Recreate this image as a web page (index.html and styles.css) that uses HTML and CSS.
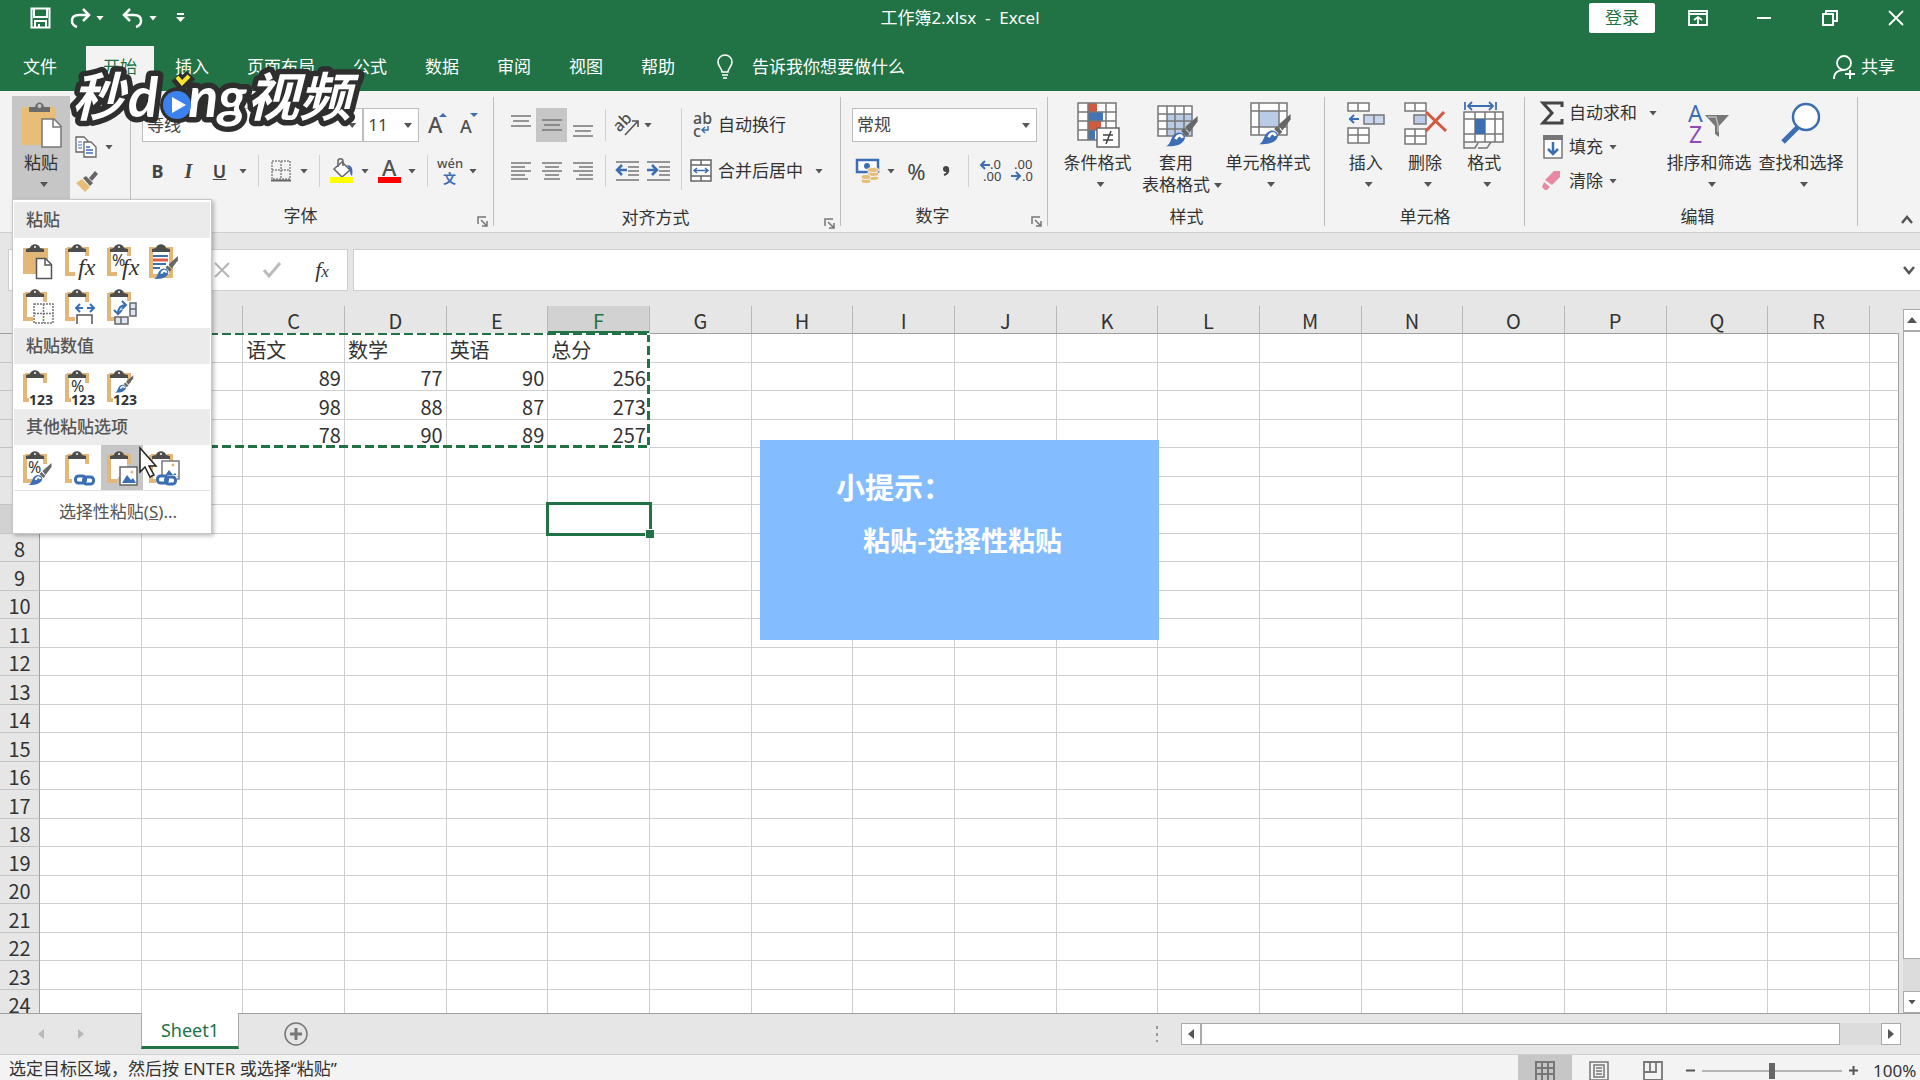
FILE: index.html
```html
<!doctype html>
<html lang="zh-CN">
<head>
	<meta charset="UTF-8">
	<title>工作簿2.xlsx - Excel</title>
	<link rel="stylesheet" href="styles.css">
</head>
<body>
	<!-- shared icon parts -->
	<svg class="sprite" width="0" height="0">
		<symbol id="board" viewBox="0 0 32 36">
			<path d="M3 5h20v8M3 4v26h8" fill="none" stroke="#e3b778" stroke-width="4"/>
			<path d="M5 7h16v10l-10 11H5z" fill="#fff"/>
			<path d="M4 8V5l4-1c1-5 9-5 10 0l4 1v3z" fill="#4d4d4d"/>
			<circle cx="13" cy="3" r="1" fill="#fff"/>
		</symbol>
		<symbol id="brush" viewBox="0 0 24 24">
			<path d="M23 1l-9 8 3 4 6-8z" fill="#666"/>
			<path d="M13 10l4 4-2 2-4-4z" fill="#666"/>
			<path d="M0 23c4-1 3-9 9-10 4 0 6 3 4 6-3 4-8 4-13 4z" fill="#3c6eb4"/>
			<path d="M7 18c1-3 4-4 5-1" fill="none" stroke="#fff" stroke-width="2"/>
		</symbol>
		<symbol id="chain" viewBox="0 0 22 12">
			<g fill="none" stroke="#3c6eb4" stroke-width="3"><rect x="2" y="2" width="10" height="7" rx="3"/><rect x="10" y="3" width="10" height="7" rx="3"/></g>
		</symbol>
		<symbol id="launch" viewBox="0 0 11 11">
			<path d="M1 8V1h8M4 4l6 6M10 5v5H5" fill="none" stroke="#777" stroke-width="1.5"/>
		</symbol>
	</svg>

	<header class="top">
		<div class="titlebar">
			<div class="quick">
				<button aria-label="保存"><svg width="21" height="22" viewBox="0 0 21 22"><path d="M1.500 1.500h18v19h-18zM4 2v8h13V2M5 20v-6h11v6M9 20v-3" fill="none" stroke="#fff" stroke-width="2"/></svg></button>
				<button aria-label="恢复"><svg width="20" height="20" viewBox="0 0 20 20"><path d="M7 19c-7-2-7-12 2-12h9M13 1l6 6-6 6" fill="none" stroke="#fff" stroke-width="2.500"/></svg><i class="caret"></i></button>
				<button aria-label="撤消"><svg width="20" height="20" viewBox="0 0 20 20"><path d="M13 19c7-2 7-12-2-12H2M7 1L1 7l6 6" fill="none" stroke="#fff" stroke-width="2.500"/></svg><i class="caret"></i></button>
				<button aria-label="自定义"><svg width="9" height="10" viewBox="0 0 9 10"><path d="M1 1h7" stroke="#fff" stroke-width="2"/><path d="M0 4h9l-4.500 5z" fill="#fff"/></svg></button>
			</div>
			<div class="doc">工作簿2.xlsx&nbsp; -&nbsp; Excel</div>
			<div class="window">
				<button class="login">登录</button>
				<button aria-label="功能区显示选项"><svg width="20" height="16" viewBox="0 0 20 16"><path d="M1 1h18v14H1zM1 4h18M10 14V7M6 10l4-3 4 3" fill="none" stroke="#fff" stroke-width="1.800"/></svg></button>
				<button aria-label="最小化"><svg width="14" height="14" viewBox="0 0 14 14"><path d="M0 7h14" stroke="#fff" stroke-width="2"/></svg></button>
				<button aria-label="还原"><svg width="16" height="16" viewBox="0 0 16 16"><path d="M1 4h10v11H1zM4 4V1h11v10h-4" fill="none" stroke="#fff" stroke-width="2"/></svg></button>
				<button aria-label="关闭"><svg width="16" height="16" viewBox="0 0 16 16"><path d="M1 1l14 14M15 1L1 15" stroke="#fff" stroke-width="1.800"/></svg></button>
			</div>
		</div>
		<nav class="tabs">
			<a class="file" href="#">文件</a>
			<a class="active" href="#">开始</a>
			<a href="#">插入</a>
			<a href="#">页面布局</a>
			<a href="#">公式</a>
			<a href="#">数据</a>
			<a href="#">审阅</a>
			<a href="#">视图</a>
			<a href="#">帮助</a>
			<a class="tell" href="#"><svg width="18" height="26" viewBox="0 0 18 26"><path d="M6 18c0-4-4-5-4-10a7 7 0 0 1 14 0c0 5-4 6-4 10zM6 21h6M7 24h4" fill="none" stroke="#fff" stroke-width="1.600"/></svg>告诉我你想要做什么</a>
			<a class="share" href="#"><svg width="22" height="24" viewBox="0 0 22 24"><circle cx="11" cy="8" r="7" fill="none" stroke="#fff" stroke-width="1.800"/><path d="M1 24c0-6 4-9 9-9M17 15v9M12 19h10" fill="none" stroke="#fff" stroke-width="2"/></svg>共享</a>
		</nav>
	</header>

	<section class="ribbon">
		<!-- clipboard -->
		<div class="group clipboard">
			<button class="big paste">
				<svg width="42" height="46"><path d="M2 5h34v38H2z" fill="#e8bd78"/><path d="M9 10V5h6c1-6 8-6 9 0h6v5z" fill="#6b6b6b"/><circle cx="19.500" cy="4" r="2" fill="#c6c6c6"/><path d="M22 17h12l7 7v21H22z" fill="#fff" stroke="#777" stroke-width="1.500"/><path d="M33 17v8h8" fill="none" stroke="#777" stroke-width="1.500"/></svg>
				<span>粘贴</span><i class="caret"></i>
			</button>
			<div class="side">
				<button aria-label="复制"><svg width="22" height="22" viewBox="0 0 22 22"><path d="M1 1h8l4 4v11H1z" fill="#fff" stroke="#666" stroke-width="1.300"/><path d="M3 6h4M3 9h4M3 12h4" stroke="#3c6eb4"/><path d="M9 6h7l5 5v10H9z" fill="#fff" stroke="#666" stroke-width="1.300"/><path d="M11 11h4M11 14h7M11 17h7" stroke="#3c6eb4" stroke-width="1.300"/></svg><i class="caret"></i></button>
				<button aria-label="格式刷"><svg width="23" height="22" viewBox="0 0 23 22"><path d="M1 13l6-4 8 8-5 5z" fill="#e8bd78"/><path d="M8 8l3-2 7 7-3 3z" fill="#666"/><path d="M14 8l6-7 3 3-6 7z" fill="#666"/></svg></button>
			</div>
			<div class="menu">
				<h4>粘贴</h4>
				<div class="icons">
					<button aria-label="粘贴"><svg width="32" height="36" viewBox="0 0 32 36"><path d="M1 4h25v26H1z" fill="#e3b778"/><path d="M4 8V5l4-1c1-5 9-5 10 0l4 1v3z" fill="#4d4d4d"/><circle cx="13" cy="3" r="1" fill="#fff"/><path d="M14.500 14.500h9l6 6v14h-15z" fill="#fff" stroke="#555" stroke-width="1.500"/><path d="M23 15v6h6" fill="none" stroke="#555" stroke-width="1.500"/></svg></button>
					<button aria-label="公式"><svg width="32" height="36"><use href="#board" width="32" height="36"/><path class="gap" d="M17 12h10v12H17z"/><text class="fx" x="14" y="31">fx</text></svg></button>
					<button aria-label="公式和数字格式"><svg width="32" height="36"><use href="#board" width="32" height="36"/><path class="gap" d="M19 12h8v12h-8z"/><text class="pct" x="6" y="22">%</text><text class="fx" x="16" y="31">fx</text></svg></button>
					<button aria-label="保留源格式"><svg width="32" height="36"><path d="M3 5h20v27H3z" fill="#fff" stroke="#e3b778" stroke-width="4"/><path d="M4 8V5l4-1c1-5 9-5 10 0l4 1v3z" fill="#4d4d4d"/><path d="M5 12h15M5 20h13" stroke="#3c6eb4" stroke-width="2"/><path d="M5 16h15" stroke="#d9614c" stroke-width="3"/><path d="M5 24h7" stroke="#3c6eb4" stroke-width="2"/><use href="#brush" x="6" y="11" width="25" height="25"/></svg></button>
					<button aria-label="无边框"><svg width="32" height="36"><use href="#board" width="32" height="36"/><path d="M12 15h19v19H12zM21.500 15v19M12 24.500h19" fill="#fff" stroke="#777" stroke-width="1.500" stroke-dasharray="2 1"/></svg></button>
					<button aria-label="保留源列宽"><svg width="32" height="36"><use href="#board" width="32" height="36"/><path d="M11 14h21v21H11z" fill="#fff"/><path d="M12 19h7M16 15l-4 4 4 4M23 19h7M26 15l4 4-4 4" fill="none" stroke="#3c6eb4" stroke-width="2"/><path d="M13 35v-9h15v9" fill="none" stroke="#555" stroke-width="1.500"/></svg></button>
					<button aria-label="转置"><svg width="32" height="36"><use href="#board" width="32" height="36"/><path class="gap" d="M9 12h22v23H9z"/><path d="M9 28h13v7H9z M24 14h6v13h-6z M15 28v7 M24 20h6" fill="#dce6f4" stroke="#666" stroke-width="1.500"/><path d="M12 25c0-6 3-9 8-9M16 12l4 4-4 4M8 21l4 4 4-4" fill="none" stroke="#3c6eb4" stroke-width="2"/></svg></button>
				</div>
				<h4>粘贴数值</h4>
				<div class="icons">
					<button aria-label="值"><svg width="32" height="36"><use href="#board" width="32" height="36"/><path class="gap" d="M7 24h25v12H7z"/><text class="num" x="7" y="35">123</text></svg></button>
					<button aria-label="值和数字格式"><svg width="32" height="36"><use href="#board" width="32" height="36"/><text class="pct" x="7" y="22">%</text><path class="gap" d="M7 24h25v12H7z"/><text class="num" x="7" y="35">123</text></svg></button>
					<button aria-label="值和源格式"><svg width="32" height="36"><use href="#board" width="32" height="36"/><use href="#brush" x="9" y="4" width="19" height="20"/><path class="gap" d="M7 24h25v12H7z"/><text class="num" x="7" y="35">123</text></svg></button>
				</div>
				<h4>其他粘贴选项</h4>
				<div class="icons">
					<button aria-label="格式"><svg width="32" height="36"><use href="#board" width="32" height="36"/><text class="pct" x="6" y="22">%</text><use href="#brush" x="6" y="11" width="25" height="24"/></svg></button>
					<button aria-label="粘贴链接"><svg width="32" height="36"><use href="#board" width="32" height="36"/><path class="gap" d="M8 23h24v12H8z"/><use href="#chain" x="9" y="23" width="23" height="12"/></svg></button>
					<button class="hot" aria-label="图片"><svg width="32" height="36"><use href="#board" width="32" height="36"/><path d="M14 16h17v18H14z" fill="#fff" stroke="#666" stroke-width="1.500"/><path d="M16 32l5-8 4 5 2-2 3 5z" fill="#3c6eb4"/><circle cx="26" cy="21" r="1.500" fill="#e3b778"/></svg></button>
					<button aria-label="链接的图片"><svg width="32" height="36"><use href="#board" width="32" height="36"/><path d="M14 10h17v18H14z" fill="#fff" stroke="#777" stroke-width="1.500"/><path d="M16 26l5-7 4 5 2-2 3 4z" fill="#3c6eb4"/><circle cx="25" cy="14" r="1.500" fill="#e3b778"/><path class="gap" d="M8 24h21v11H8z"/><use href="#chain" x="7" y="23" width="23" height="12"/></svg></button>
				</div>
				<button class="special">选择性粘贴(<u>S</u>)...</button>
				<svg class="pointer" width="19" height="32" viewBox="0 0 19 32"><path d="M1 1v24l5-5 5 10 4-2-5-9h7z" fill="#fff" stroke="#222" stroke-width="1.500"/></svg>
			</div>
		</div>

		<!-- font -->
		<div class="group font">
			<div class="row">
				<span class="pick face"><select aria-label="字体"><option>等线</option></select></span>
				<span class="pick size"><select aria-label="字号"><option>11</option></select></span>
				<button aria-label="增大字号"><svg width="20" height="24"><text class="lat" x="1" y="20" font-size="22">A</text><path d="M12 4h8l-4-4z" fill="#3c6eb4"/></svg></button>
				<button aria-label="减小字号"><svg width="20" height="24"><text class="lat" x="2" y="20" font-size="18">A</text><path d="M12 0h8l-4 4z" fill="#3c6eb4"/></svg></button>
			</div>
			<div class="row">
				<button class="glyph"><b>B</b></button>
				<button class="glyph it"><b>I</b></button>
				<button class="glyph"><u>U</u></button><i class="drop"></i>
				<i class="sep"></i>
				<button aria-label="边框"><svg width="20" height="22"><path d="M1 1h18v18H1zM10 1v18M1 10h18" fill="none" stroke="#888" stroke-width="1.500" stroke-dasharray="2 1"/><path d="M0 20.500h20" stroke="#666" stroke-width="2"/></svg></button><i class="drop"></i>
				<i class="sep"></i>
				<button aria-label="填充颜色"><svg width="24" height="26"><path d="M4 11l8-7 8 8-8 7z" fill="#fff" stroke="#666" stroke-width="1.500"/><path d="M8 9V3c0-3 5-3 5 0v5" fill="none" stroke="#666" stroke-width="1.500"/><path d="M17 7c6 0 6 6 5 11-3-2-1-7-5-11z" fill="#3c6eb4"/><path d="M0 19h23v6H0z" fill="#ff0"/></svg></button><i class="drop"></i>
				<button aria-label="字体颜色"><svg width="24" height="26"><text class="lat" x="5" y="18" font-size="22">A</text><path d="M1 19h23v6H1z" fill="#f00"/></svg></button><i class="drop"></i>
				<i class="sep"></i>
				<button aria-label="拼音"><svg width="26" height="28"><text class="lat" x="0" y="11" font-size="13">wén</text><text class="wen" x="6" y="26" font-size="13">文</text></svg></button><i class="drop"></i>
			</div>
			<div class="name launcher">字体<svg width="11" height="11"><use href="#launch"/></svg></div>
		</div>

		<!-- alignment -->
		<div class="group align">
			<div class="cols">
				<div class="block">
					<div class="row">
						<button aria-label="顶端对齐"><svg width="20" height="24"><path d="M0 3h20M2 8h16M0 13h20" stroke="#777" stroke-width="1.500"/></svg></button>
						<button class="on" aria-label="垂直居中"><svg width="20" height="24"><path d="M0 7h20M2 12h16M0 17h20" stroke="#777" stroke-width="1.500"/></svg></button>
						<button aria-label="底端对齐"><svg width="20" height="24"><path d="M0 13h20M2 18h16M0 23h20" stroke="#777" stroke-width="1.500"/></svg></button>
						<i class="sep"></i>
						<button aria-label="方向"><svg width="24" height="24"><text class="lat" x="0" y="16" font-size="16" transform="rotate(-45 6 14)">ab</text><path d="M9 22L22 8M16 8h6v6" fill="none" stroke="#555" stroke-width="1.600"/></svg></button><i class="drop tight"></i>
					</div>
					<div class="row">
						<button aria-label="左对齐"><svg width="20" height="18"><path d="M0 1h20M0 5h14M0 9h20M0 13h14M0 17h17" stroke="#777" stroke-width="1.500"/></svg></button>
						<button aria-label="居中"><svg width="20" height="18"><path d="M0 1h20M3 5h14M0 9h20M3 13h14M2 17h16" stroke="#777" stroke-width="1.500"/></svg></button>
						<button aria-label="右对齐"><svg width="20" height="18"><path d="M0 1h20M6 5h14M0 9h20M6 13h14M3 17h17" stroke="#777" stroke-width="1.500"/></svg></button>
						<i class="sep"></i>
						<button aria-label="减少缩进"><svg width="24" height="22"><path d="M0 2h23M12 7h11M12 11h11M12 15h11M0 20h23" stroke="#777" stroke-width="1.500"/><path d="M1 10h10M6 5l-5 5 5 5" fill="none" stroke="#3c6eb4" stroke-width="2.500"/></svg></button>
						<button aria-label="增加缩进"><svg width="24" height="22"><path d="M0 2h23M12 7h11M12 11h11M12 15h11M0 20h23" stroke="#777" stroke-width="1.500"/><path d="M0 10h10M5 5l5 5-5 5" fill="none" stroke="#3c6eb4" stroke-width="2.500"/></svg></button>
					</div>
				</div>
				<i class="sep tall"></i>
				<div class="block">
					<div class="row">
						<button class="wide"><svg width="26" height="26"><text class="lat" x="5" y="12" font-size="16">ab</text><text class="lat" x="5" y="25" font-size="16">c</text><path d="M20 14v4h-5M17 15l-3 3 3 3" fill="none" stroke="#3c6eb4" stroke-width="1.500"/></svg>自动换行</button>
					</div>
					<div class="row">
						<button class="wide"><svg width="26" height="24"><path d="M3 1h20v21H3zM3 6h20M3 17h20M13 1v5M13 17v5" fill="#fff" stroke="#666" stroke-width="1.500"/><path d="M6 11.500h14M9 9l-3 2.500L9 14M17 9l3 2.500-3 2.500" fill="none" stroke="#3c6eb4" stroke-width="1.500"/></svg>合并后居中</button><i class="drop far"></i>
					</div>
				</div>
			</div>
			<div class="name launcher">对齐方式<svg width="11" height="11"><use href="#launch"/></svg></div>
		</div>

		<!-- number -->
		<div class="group number">
			<div class="row">
				<span class="pick format"><select aria-label="数字格式"><option>常规</option></select></span>
			</div>
			<div class="row">
				<button aria-label="会计数字格式"><svg width="24" height="26"><path d="M1 2h21v12H1z" fill="#fff" stroke="#3c6eb4" stroke-width="2.500"/><circle cx="11" cy="8" r="3" fill="#3c6eb4"/><g fill="#e8bd78" stroke="#f3f3f3"><ellipse cx="17" cy="20" rx="6" ry="2.500"/><ellipse cx="17" cy="16" rx="6" ry="2.500"/><ellipse cx="17" cy="12" rx="6" ry="2.500"/><ellipse cx="10" cy="23" rx="5" ry="2.500"/><ellipse cx="10" cy="19" rx="5" ry="2.500"/></g></svg></button><i class="drop"></i>
				<button class="glyph percent">%</button>
				<button class="glyph comma" aria-label="千位分隔样式"><svg width="8" height="12"><circle cx="4" cy="4" r="3" fill="#444"/><path d="M6 3c1 4-1 6-4 7" fill="none" stroke="#444" stroke-width="2"/></svg></button>
				<i class="sep"></i>
				<button aria-label="增加小数位数"><svg width="24" height="26"><text class="dec" x="11" y="11">.0</text><text class="dec" x="4" y="23">.00</text><path d="M2 7h9M6 3L2 7l4 4" fill="none" stroke="#3c6eb4" stroke-width="2"/></svg></button>
				<button aria-label="减少小数位数"><svg width="24" height="26"><text class="dec" x="4" y="11">.00</text><text class="dec" x="12" y="23">.0</text><path d="M1 18h9M6 14l4 4-4 4" fill="none" stroke="#3c6eb4" stroke-width="2"/></svg></button>
			</div>
			<div class="name launcher">数字<svg width="11" height="11"><use href="#launch"/></svg></div>
		</div>

		<!-- styles -->
		<div class="group styles">
			<div class="bigs">
				<button class="big w77"><svg width="44" height="46"><path d="M2 1h38v37H2z" fill="#fff"/><path d="M12 1h9v9h-9zM12 19h13v9H12z" fill="#d4573f"/><path d="M12 10h15v9H12zM12 28h7v10h-7z" fill="#4375b5"/><path d="M2 1h38v37H2zM12 1v37M30 1v37M2 10h38M2 19h38M2 28h38" fill="none" stroke="#777" stroke-width="1.500"/><path d="M21 26h22v19H21z" fill="#fff" stroke="#666" stroke-width="1.500"/><path d="M27 33h10M27 38h10M35 29l-5 13" stroke="#444" stroke-width="1.500"/></svg><span>条件格式</span><i class="caret"></i></button>
				<button class="big w84"><svg width="44" height="46"><path d="M4 4h34v30H4z" fill="#fff"/><path d="M13 12h25v22H13z" fill="#b9cbe6"/><path d="M4 4h34v30H4zM13 4v30M21 4v30M30 4v30M4 12h34M4 19h34M4 27h34" fill="none" stroke="#777" stroke-width="1.500"/><use href="#brush" x="12" y="12" width="33" height="34"/></svg><span>套用<br>表格格式</span><i class="caret inline"></i></button>
				<button class="big w94"><svg width="44" height="46"><path d="M5 1h36v32H5z" fill="#fff"/><path d="M13 9h20v16H13z" fill="#b9cbe6"/><path d="M5 1h36v32H5zM13 1v32M33 1v32M5 9h36M5 25h36" fill="none" stroke="#777" stroke-width="1.500"/><use href="#brush" x="13" y="10" width="33" height="34"/></svg><span>单元格样式</span><i class="caret"></i></button>
			</div>
			<div class="name">样式</div>
		</div>

		<!-- cells -->
		<div class="group cells">
			<div class="bigs">
				<button class="big w60"><svg width="40" height="46"><path d="M2 1h21v8H2zM12 1v8M2 26h21v15H2zM12 26v15M2 33h21" fill="#fff" stroke="#777" stroke-width="1.500"/><path d="M18 13h20v9H18zM28 13v9" fill="#c9d7ee" stroke="#777" stroke-width="1.500"/><path d="M3 17h10M8 13l-4 4 4 4" fill="none" stroke="#3c6eb4" stroke-width="2"/></svg><span>插入</span><i class="caret"></i></button>
				<button class="big w60"><svg width="42" height="46"><path d="M1 1h21v8H1zM11 1v8M1 27h21v15H1zM11 27v15M1 34h21" fill="#fff" stroke="#777" stroke-width="1.500"/><path d="M10 13h12v9H10z" fill="#b9cbe6" stroke="#777" stroke-width="1.500"/><path d="M22 10l20 19M40 10L22 29" stroke="#d4573f" stroke-width="3"/></svg><span>删除</span><i class="caret"></i></button>
				<button class="big w60"><svg width="42" height="48"><path d="M1 10h39v30H1zM12 10v30M22 10v30M32 10v30M1 17h39M1 32h39" fill="#fff" stroke="#777" stroke-width="1.500"/><path d="M12 17h10v15H12z" fill="#3c6eb4"/><path d="M1 40v6h11l3-5M15 46h9l4-6" fill="none" stroke="#777" stroke-width="1.500"/><path d="M2 0v8M33 0v8M5 4h25M9 0L5 4l4 4M26 0l4 4-4 4" fill="none" stroke="#3c6eb4" stroke-width="1.800"/></svg><span>格式</span><i class="caret"></i></button>
			</div>
			<div class="name">单元格</div>
		</div>

		<!-- editing -->
		<div class="group editing">
			<div class="bigs">
				<div class="list">
					<button><svg width="26" height="26"><path d="M25 7V3H6l9 10-9 10h19v-4" fill="none" stroke="#444" stroke-width="3"/></svg>自动求和<i class="caret more"></i></button>
					<button><svg width="26" height="26"><path d="M7 2h18v22H7z" fill="#fff" stroke="#777" stroke-width="1.500"/><path d="M6 1h20v5H6z" fill="#777"/><path d="M16 8v12M11 15l5 5 5-5" fill="none" stroke="#3c6eb4" stroke-width="2.500"/></svg>填充<i class="caret"></i></button>
					<button><svg width="26" height="26"><path d="M17 3h6v6l-8 8-7-5z" fill="#e888a4"/><path d="M7 14l6 5-3 3H8l-3-3z" fill="#e888a4"/></svg>清除<i class="caret"></i></button>
				</div>
				<button class="big w92"><svg width="42" height="46"><text class="az" x="0" y="20" fill="#3c6eb4">A</text><text class="az" x="1" y="41" fill="#8e4bb8">Z</text><path d="M17 13h24L31 24v11l-4-3v-8z" fill="#777"/><path d="M20 15h8l2 8v7" fill="none" stroke="#bbb" stroke-width="1.500"/></svg><span>排序和筛选</span><i class="caret"></i></button>
				<button class="big w92"><svg width="42" height="46"><circle cx="26" cy="15" r="13" fill="#fff" stroke="#3c6eb4" stroke-width="2.500"/><path d="M18 25L3 40" stroke="#3c6eb4" stroke-width="5"/></svg><span>查找和选择</span><i class="caret"></i></button>
			</div>
			<div class="name">编辑</div>
		</div>
		<button class="collapse" aria-label="折叠功能区"><svg width="12" height="9"><path d="M1 8l5-6 5 6" fill="none" stroke="#555" stroke-width="2.500"/></svg></button>
	</section>

	<section class="formula">
		<div class="namebox">
			<button aria-label="取消"><svg width="16" height="16"><path d="M1 1l14 14M15 1L1 15" stroke="#b5b5b5" stroke-width="2"/></svg></button>
			<button aria-label="输入"><svg width="18" height="16"><path d="M1 8l5 6L17 1" fill="none" stroke="#bbb" stroke-width="3"/></svg></button>
			<button class="insfn"><i>f</i><small>x</small></button>
		</div>
		<div class="entry">
			<input type="text" aria-label="编辑栏">
			<svg width="12" height="9"><path d="M1 1l5 6 5-6" fill="none" stroke="#555" stroke-width="2.500"/></svg>
		</div>
	</section>

	<main class="work">
		<div class="sheet">
			<table id="grid"></table>
			<div class="ants"></div>
		</div>
		<div class="vscroll">
			<button aria-label="向上"><i class="caret up"></i></button>
			<div class="thumb"></div>
			<button aria-label="向下"><i class="caret"></i></button>
		</div>
	</main>

	<section class="sheets">
		<div class="nav"><button aria-label="上一张"><i class="caret left"></i></button><button aria-label="下一张"><i class="caret right"></i></button></div>
		<button class="sheettab">Sheet1</button>
		<button class="add" aria-label="新工作表"><svg width="24" height="24"><circle cx="12" cy="12" r="11" fill="none" stroke="#777" stroke-width="1.500"/><path d="M12 6v12M6 12h12" stroke="#777" stroke-width="3"/></svg></button>
		<svg class="dots" width="2" height="16"><path d="M1 0v16" stroke="#999" stroke-width="2" stroke-dasharray="3 4"/></svg>
		<div class="hscroll">
			<button aria-label="向左"><i class="caret left"></i></button>
			<div class="thumb"></div>
			<button aria-label="向右"><i class="caret right"></i></button>
		</div>
	</section>

	<footer class="status">
		<span class="msg">选定目标区域，然后按 ENTER 或选择“粘贴”</span>
		<button class="on" aria-label="普通"><svg width="20" height="20"><path d="M1 1h18v19H1zM7 1v19M13 1v19M1 7h18M1 13h18" fill="none" stroke="#777" stroke-width="2"/></svg></button>
		<button aria-label="页面布局"><svg width="20" height="20"><path d="M1 1h18v18H1zM5 4h10v12H5zM7 7h6M7 10h6M7 13h6" fill="none" stroke="#777" stroke-width="1.500"/></svg></button>
		<button aria-label="分页预览"><svg width="20" height="20"><path d="M1 1h18v18H1zM7 1v10h6V1M1 11h12" fill="none" stroke="#777" stroke-width="1.800"/></svg></button>
		<div class="zoom">
			<button aria-label="缩小"><svg width="9" height="9"><path d="M0 4.500h9" stroke="#555" stroke-width="2"/></svg></button>
			<input type="range" aria-label="显示比例" min="0" max="100" value="50">
			<button aria-label="放大"><svg width="9" height="9"><path d="M0 4.500h9M4.500 0v9" stroke="#555" stroke-width="2"/></svg></button>
			<span>100%</span>
		</div>
	</footer>

	<!-- video overlays -->
	<svg class="brand" width="290" height="70">
		<defs>
			<g id="brandtext"><text class="han" x="2" y="44">秒</text><text class="rom" x="58" y="45">d</text><text class="rom" x="118" y="45">ng</text><text class="han" x="177" y="44">视频</text></g>
		</defs>
		<use class="edge" href="#brandtext"/>
		<circle cx="108" cy="33" r="18" fill="#2e2e2e"/>
		<path d="M106 5l6 7 9-9" fill="none" stroke="#2e2e2e" stroke-width="12"/>
		<use class="face" href="#brandtext"/>
		<circle cx="107" cy="33" r="14" fill="#3b82ee"/>
		<path d="M102 25v16l14-8z" fill="#fff"/>
		<path d="M107 5l5 6 7-7" fill="none" stroke="#ffe62e" stroke-width="4"/>
	</svg>
	<aside class="tip">
		<h3>小提示：</h3>
		<p>粘贴-选择性粘贴</p>
	</aside>

	<script src="script.js"></script>
</body>
</html>
```

FILE: styles.css
```css
* {
	box-sizing: border-box;
}
body {
	margin: 0;
	height: 100vh;
	display: flex;
	flex-direction: column;
	overflow: hidden;
	background: #e6e6e6;
	color: #333;
	font-family: "Noto Sans", "Noto Sans CJK SC", sans-serif;
	font-size: 17px;
	line-height: 22px;
}
button, select, input {
	font: inherit;
	color: inherit;
	border: none;
	background: none;
	margin: 0;
	padding: 0;
	border-radius: 0;
}
button {
	display: flex;
	align-items: center;
	justify-content: center;
}
svg {
	display: block;
	flex: none;
	overflow: visible;
}
.sprite {
	position: absolute;
}
.caret {
	flex: none;
	width: 8px;
	height: 5px;
	background: #555;
	clip-path: polygon(0 0, 100% 0, 50% 100%);
}
.caret.up {
	clip-path: polygon(50% 0, 100% 100%, 0 100%);
	width: 10px;
	height: 6px;
}
.caret.left {
	width: 6px;
	height: 10px;
	clip-path: polygon(100% 0, 100% 100%, 0 50%);
}
.caret.right {
	width: 6px;
	height: 10px;
	clip-path: polygon(0 0, 100% 50%, 0 100%);
}

/* title bar and tabs */
.top {
	background: #217346;
	color: #fff;
	height: 91px;
	flex: none;
}
.top .caret {
	background: #fff;
}
.titlebar {
	display: grid;
	grid-template-columns: 1fr auto 1fr;
	align-items: center;
	height: 36px;
}
.quick {
	display: flex;
	align-items: center;
	gap: 19px;
	padding-left: 30px;
}
.quick button {
	gap: 6px;
}
.window {
	display: flex;
	justify-content: flex-end;
	align-items: center;
	gap: 20px;
	padding-right: 1px;
}
.window button {
	width: 46px;
	height: 30px;
}
.window .login {
	width: 66px;
	background: #fff;
	color: #217346;
	border-radius: 2px;
}
.tabs {
	display: flex;
	height: 45px;
	margin-top: 10px;
}
.tabs a {
	display: flex;
	align-items: center;
	padding: 0 19px;
	color: #fff;
	text-decoration: none;
	height: 45px;
	padding-bottom: 4px;
}
.tabs .file {
	padding: 0 29px 4px 23px;
}
.tabs .active {
	background: #f3f3f3;
	color: #217346;
	padding: 0 17px 4px;
	margin-right: 2px;
}
.tabs .tell {
	gap: 18px;
	padding-left: 22px;
}
.tabs .share {
	gap: 6px;
	margin-left: auto;
	padding-right: 25px;
}

/* ribbon */
.ribbon {
	display: flex;
	height: 142px;
	flex: none;
	background: #f3f3f3;
	border-bottom: 1px solid #cfcfcf;
	position: relative;
}
.group {
	position: relative;
	flex: none;
	display: flex;
	flex-direction: column;
	gap: 12px;
	padding: 17px 11px 0;
}
.group::after {
	content: "";
	position: absolute;
	right: 0;
	top: 6px;
	bottom: 6px;
	width: 1px;
	background: #bdbdbd;
}
.clipboard {
	width: 131px;
	flex-direction: row;
	gap: 5px;
	padding: 5px 0 0 12px;
}
.font { width: 363px; }
.align { width: 347px; }
.number { width: 207px; }
.styles { width: 277px; }
.cells { width: 200px; }
.editing { width: 333px; }
.styles, .cells, .editing {
	padding-top: 5px;
	gap: 6px;
}
.editing {
	padding: 5px 0 0 12px;
}
.row {
	display: flex;
	align-items: center;
	height: 34px;
}
.row button {
	width: 31px;
	height: 34px;
	flex: none;
}
.row .on {
	background: #c6c6c6;
}
.row .wide {
	width: auto;
	gap: 4px;
}
.drop {
	flex: none;
	width: 16px;
	height: 34px;
	display: flex;
	align-items: center;
	justify-content: center;
}
.drop::after {
	content: "";
	width: 8px;
	height: 5px;
	background: #555;
	clip-path: polygon(0 0, 100% 0, 50% 100%);
}
.drop.tight {
	width: 10px;
}
.drop.far {
	margin-left: 8px;
}
.sep {
	flex: none;
	width: 14px;
	height: 32px;
	background: linear-gradient(#d0d0d0, #d0d0d0) center / 1px 100% no-repeat;
}
.sep.tall {
	height: 82px;
}
.cols {
	display: flex;
}
.block {
	display: flex;
	flex-direction: column;
	gap: 12px;
}
.name {
	display: flex;
	justify-content: center;
	align-items: center;
	position: relative;
	height: 22px;
}
.font .name, .align .name, .number .name {
	margin-top: 5px;
}
.launcher {
	padding-right: 24px;
}
.launcher svg {
	position: absolute;
	right: -5px;
	bottom: 0;
}
.pick {
	position: relative;
	height: 34px;
	background: #fff;
	border: 1px solid #bdbdbd;
}
.pick select {
	appearance: none;
	width: 100%;
	height: 100%;
	padding-left: 4px;
	color: #444;
}
.pick::after {
	content: "";
	position: absolute;
	right: 6px;
	top: 14px;
	width: 8px;
	height: 5px;
	background: #555;
	clip-path: polygon(0 0, 100% 0, 50% 100%);
	pointer-events: none;
}
.face { width: 222px; }
.size { width: 56px; margin-right: 2px; }
.format { width: 185px; }
.glyph {
	font-size: 18px;
	color: #444;
}
.it {
	font-family: "Liberation Serif", serif;
	font-style: italic;
	font-size: 20px;
}
.percent {
	font-size: 22px;
	padding-left: 4px;
}
.glyph u { font-weight: 600; }
.lat {
	font-family: "Noto Sans", sans-serif;
	font-weight: 500;
	fill: #505050;
}
.wen {
	font-family: "Noto Sans CJK SC", sans-serif;
	font-weight: bold;
	fill: #3c6eb4;
}
.dec {
	font-size: 13px;
	fill: #444;
}
.az {
	font-size: 23px;
}
.bigs {
	display: flex;
	height: 104px;
}
.big {
	position: relative;
	flex-direction: column;
	justify-content: flex-start;
	height: 104px;
	padding-top: 6px;
	text-align: center;
	white-space: nowrap;
}
.big svg {
	height: 50px;
}
.big .caret {
	margin: 8px 0 0 6px;
}
.big .caret.inline {
	position: absolute;
	right: 2px;
	bottom: 12px;
}
.w60 { width: 60px; }
.w77 { width: 77px; }
.w84 {
	width: 84px;
	padding-right: 4px;
}
.w84 + .big {
	padding-left: 2px;
}
.big.w84 .inline {
	right: -2px;
}
.w94 { width: 94px; }
.w92 { width: 92px; }
.paste {
	width: 58px;
	background: #c6c6c6;
}
.side {
	padding-top: 34px;
}
.side button {
	height: 34px;
	gap: 8px;
}
.list {
	width: 126px;
}
.list button {
	height: 34px;
	gap: 6px;
}
.list .more {
	margin-left: 6px;
}
.collapse {
	margin: auto 7px 8px auto;
}

/* paste menu */
.menu {
	position: absolute;
	z-index: 5;
	left: 12px;
	top: 108px;
	width: 200px;
	padding: 2px 1px 1px;
	background: #fff;
	border: 1px solid #c6c6c6;
	box-shadow: 2px 2px 4px rgba(0, 0, 0, 0.25);
	color: #555;
}
.menu h4 {
	margin: 0;
	padding: 7px 12px;
	background: #ebebeb;
	font-size: 17px;
	font-weight: 500;
	line-height: 22px;
}
.icons {
	display: flex;
	flex-wrap: wrap;
	padding-left: 3px;
}
.icons button {
	width: 42px;
	height: 45px;
	padding-top: 2px;
}
.icons .hot {
	background: #c6c6c6;
}
.fx {
	font: italic 24px "Liberation Serif", serif;
	fill: #333;
}
.pct {
	font-size: 16px;
	fill: #333;
}
.num {
	font-size: 14px;
	font-weight: bold;
	fill: #333;
}
.gap {
	fill: #fff;
}
.special {
	width: 100%;
	height: 42px;
	border-top: 1px solid #e1e1e1;
	padding-left: 12px;
}
.pointer {
	position: absolute;
	left: 126px;
	top: 247px;
}

/* formula bar */
.formula {
	display: flex;
	gap: 5px;
	height: 73px;
	flex: none;
	padding: 16px 0 15px 8px;
}
.namebox {
	display: flex;
	justify-content: flex-end;
	align-items: center;
	width: 340px;
	background: #fff;
	border: 1px solid #cfcfcf;
}
.namebox button {
	width: 50px;
}
.insfn {
	font-family: "Liberation Serif", serif;
	font-style: italic;
	font-size: 22px;
}
.insfn small {
	font-size: 17px;
	padding-top: 4px;
}
.entry {
	display: flex;
	align-items: center;
	flex: 1;
	padding-right: 5px;
	background: #fff;
	border: 1px solid #cfcfcf;
	border-right: none;
}
.entry input {
	flex: 1;
	height: 100%;
}

/* grid */
.work {
	display: flex;
	flex: 1;
	min-height: 0;
}
.sheet {
	position: relative;
	flex: 1;
	overflow: hidden;
}
table {
	width: 100%;
	table-layout: fixed;
	border-collapse: separate;
	border-spacing: 0;
	font-family: "Noto Sans CJK SC", sans-serif;
	font-size: 20px;
	line-height: 25px;
	color: #333;
}
col.rows { width: 40px; }
col.rest { width: 29px; }
th, td {
	padding: 2px 3px 0;
	font-weight: normal;
	height: 29px;
	white-space: nowrap;
}
tbody tr:nth-child(even) > * {
	height: 28px;
}
thead th {
	height: 28px;
	padding: 2px 0 0;
	border-right: 1px solid #b8b8b8;
	border-bottom: 1px solid #9f9f9f;
}
thead th:last-child {
	border-right: none;
}
thead .cur {
	background: #d2d2d2;
	color: #217346;
	border-bottom-color: #217346;
	box-shadow: inset 0 -2px #217346;
}
tbody th {
	padding: 2px 0 0;
	background: #e6e6e6;
	border-right: 1px solid #9f9f9f;
	border-bottom: 1px solid #c4c4c4;
}
tbody th.cur {
	background: #d2d2d2;
}
td {
	background: #fff;
	text-align: right;
	border-right: 1px solid #cfcfcf;
	border-bottom: 1px solid #cfcfcf;
}
td:last-child {
	border-right-color: #9f9f9f;
}
td.label {
	text-align: left;
}
td.active {
	position: relative;
}
td.active::before {
	content: "";
	position: absolute;
	inset: -3px -3px -3px -2px;
	border: 3px solid #217346;
}
td.active::after {
	content: "";
	position: absolute;
	right: -5px;
	bottom: -5px;
	width: 8px;
	height: 8px;
	background: #217346;
	border: solid #fff;
	border-width: 1px 0 0 1px;
}
.ants {
	position: absolute;
	left: 40px;
	top: 27px;
	width: calc((100% - 69px) / 18 * 6);
	height: 115px;
	background:
		repeating-linear-gradient(90deg, #217346 0 9px, #fff 9px 13px) top / 100% 2px no-repeat,
		repeating-linear-gradient(90deg, #217346 0 9px, #fff 9px 13px) bottom / 100% 3px no-repeat,
		repeating-linear-gradient(#217346 0 9px, #fff 9px 13px) right / 3px 100% no-repeat;
}
.vscroll {
	display: flex;
	flex-direction: column;
	width: 17px;
	margin: 3px 0 0 4px;
	background: #dcdcdc;
}
.vscroll button {
	height: 22px;
	background: #fff;
	border: 1px solid #ababab;
	border-right: none;
}
.vscroll .thumb {
	flex: 1;
	margin-bottom: 32px;
	background: #fff;
	border: 1px solid #ababab;
	border-right: none;
}

/* sheet tabs */
.sheets {
	display: flex;
	align-items: center;
	height: 41px;
	flex: none;
	border-top: 1px solid #9f9f9f;
}
.nav {
	display: flex;
	gap: 34px;
	width: 141px;
	padding-left: 38px;
}
.nav .caret {
	background: #b8b8b8;
}
.sheettab {
	align-self: flex-start;
	width: 98px;
	height: 36px;
	margin-top: -1px;
	background: #fff;
	color: #217346;
	font-size: 18px;
	border: 1px solid #ababab;
	border-top: none;
	border-bottom: 3px solid #217346;
}
.add {
	margin-left: 45px;
}
.dots {
	margin-left: auto;
}
.hscroll {
	display: flex;
	width: 720px;
	height: 22px;
	margin: 0 19px 0 23px;
	background: #dcdcdc;
}
.hscroll button {
	width: 20px;
	background: #fff;
	border: 1px solid #ababab;
}
.hscroll .thumb {
	flex: 1;
	margin-right: 41px;
	background: #fff;
	border: 1px solid #ababab;
}

/* status bar */
.status {
	display: flex;
	height: 26px;
	flex: none;
	background: #f3f3f3;
	border-top: 1px solid #cfcfcf;
	line-height: 28px;
	padding-left: 9px;
}
.msg {
	margin-right: auto;
}
.status button {
	width: 54px;
	padding-top: 6px;
}
.status .on {
	background: #c6c6c6;
}
.zoom {
	display: flex;
	align-items: center;
	width: 240px;
	padding-left: 2px;
}
.zoom button {
	width: 17px;
}
.zoom input {
	appearance: none;
	width: 140px;
	height: 2px;
	margin: 7px 3px 0;
	background: #b5b5b5;
}
.zoom input::-webkit-slider-thumb {
	appearance: none;
	width: 6px;
	height: 16px;
	background: #666;
}
.zoom span {
	padding: 6px 0 0 11px;
}

/* overlays */
.brand {
	position: absolute;
	z-index: 8;
	left: 70px;
	top: 72px;
	font-style: italic;
	font-weight: bold;
}
.han {
	font-family: "Noto Sans CJK SC", sans-serif;
	font-size: 52px;
}
.rom {
	font-family: Lato, sans-serif;
	font-size: 56px;
}
.edge {
	fill: #2e2e2e;
	stroke: #2e2e2e;
	stroke-width: 11px;
	stroke-linejoin: round;
}
.brand .face {
	fill: #fff;
}
.tip {
	position: absolute;
	left: 760px;
	top: 440px;
	width: 399px;
	height: 200px;
	padding: 28px 0 0 76px;
	background: #84bdff;
	color: #fff;
	font-family: "Noto Sans CJK SC", sans-serif;
	font-weight: bold;
}
.tip h3 {
	margin: 0;
	font-size: 29px;
	line-height: 36px;
}
.tip p {
	margin: 18px 0 0 27px;
	font-size: 27px;
	line-height: 36px;
}
```

FILE: script.js
```js
var letters = 'ABCDEFGHIJKLMNOPQR'.split('');
var data = {
	1: { C: '语文', D: '数学', E: '英语', F: '总分' },
	2: { C: 89, D: 77, E: 90, F: 256 },
	3: { C: 98, D: 88, E: 87, F: 273 },
	4: { C: 78, D: 90, E: 89, F: 257 }
};
var active = { col: 'F', row: 7 };

var html = '<colgroup><col class="rows">';
for (var i = 0; i < letters.length; i++) html += '<col>';
html += '<col class="rest"></colgroup><thead><tr><th></th>';
for (var i = 0; i < letters.length; i++) {
	html += '<th' + (letters[i] == active.col ? ' class="cur"' : '') + '>' + letters[i] + '</th>';
}
html += '<th></th></tr></thead><tbody>';

for (var r = 1; r <= 24; r++) {
	html += '<tr><th' + (r == active.row ? ' class="cur"' : '') + '>' + r + '</th>';
	for (var i = 0; i < letters.length; i++) {
		var value = (data[r] && data[r][letters[i]]) || '';
		var cls = '';
		if (r == 1) cls = ' class="label"';
		if (r == active.row && letters[i] == active.col) cls = ' class="active"';
		html += '<td' + cls + '>' + value + '</td>';
	}
	html += '<td></td></tr>';
}
document.getElementById('grid').innerHTML = html + '</tbody>';
```
